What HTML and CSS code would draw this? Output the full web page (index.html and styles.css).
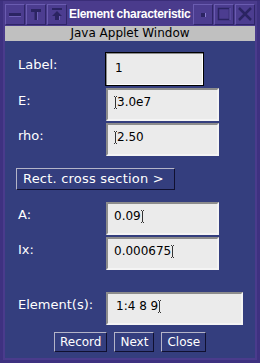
FILE: index.html
```html
<!DOCTYPE html>
<html lang="en">
<head>
  <meta charset="UTF-8" />
  <title>Element characteristic</title>
  <link rel="stylesheet" href="styles.css">
</head>
<body>
  <div class="frame">
    <div class="titlebar">
      <div class="tb-btn">
        <svg width="18" height="19" viewBox="0 0 18 19"><rect x="3" y="8" width="12" height="3" fill="#2b2462"/><line x1="3" y1="11.5" x2="15" y2="11.5" stroke="#6d5fb5"/></svg>
      </div>
      <div class="tb-btn">
        <svg width="18" height="19" viewBox="0 0 18 19"><rect x="4" y="4" width="10" height="3" fill="#2b2462"/><rect x="7.5" y="7" width="3" height="8" fill="#2b2462"/><line x1="10.5" y1="7" x2="10.5" y2="15" stroke="#6d5fb5"/></svg>
      </div>
      <div class="tb-btn">
        <svg width="18" height="19" viewBox="0 0 18 19"><rect x="4" y="3" width="10" height="2" fill="#2b2462"/><polygon points="9,6 14,11 11,11 11,15 7,15 7,11 4,11" fill="#2b2462"/><line x1="11.5" y1="11" x2="11.5" y2="15" stroke="#6d5fb5"/></svg>
      </div>
      <div class="title">Element characteristic</div>
      <div class="tb-btn">
        <svg width="18" height="19" viewBox="0 0 18 19"><rect x="7" y="8" width="4" height="4" fill="#2b2462"/><line x1="11.5" y1="8" x2="11.5" y2="12" stroke="#8a7dd0"/></svg>
      </div>
      <div class="tb-btn">
        <svg width="18" height="19" viewBox="0 0 18 19"><rect x="3.5" y="3.5" width="11" height="11" fill="none" stroke="#2b2462" stroke-width="1.5"/><line x1="15" y1="3" x2="15" y2="15" stroke="#6d5fb5"/></svg>
      </div>
      <div class="tb-btn">
        <svg width="18" height="19" viewBox="0 0 18 19"><path d="M3 3 L15 15 M15 3 L3 15" stroke="#2b2462" stroke-width="2.5"/></svg>
      </div>
    </div>

    <div class="applet-bar">Java Applet Window</div>

    <div class="panel">
      <div class="group top">
        <div class="row">
          <span class="lbl">Label:</span>
          <div class="field focus">1</div>
        </div>
        <div class="row">
          <span class="lbl">E:</span>
          <div class="field"><span class="caret"></span>3.0e7</div>
        </div>
        <div class="row">
          <span class="lbl">rho:</span>
          <div class="field"><span class="caret"></span>2.50</div>
        </div>
      </div>

      <button class="btn rect">Rect. cross section &gt;</button>

      <div class="group mid">
        <div class="row">
          <span class="lbl">A:</span>
          <div class="field">0.09<span class="caret"></span></div>
        </div>
        <div class="row">
          <span class="lbl">Ix:</span>
          <div class="field">0.000675<span class="caret"></span></div>
        </div>
      </div>

      <div class="group bottom">
        <div class="row">
          <span class="lbl">Element(s):</span>
          <div class="field wide">1:4 8 9<span class="caret"></span></div>
        </div>
      </div>

      <div class="actions">
        <button class="btn">Record</button>
        <button class="btn">Next</button>
        <button class="btn">Close</button>
      </div>
    </div>
  </div>
</body>
</html>
```

FILE: styles.css
```css
body {
  margin: 0;
  font-family: 'DejaVu Sans', sans-serif;
}

.frame {
  width: 260px;
  height: 363px;
  box-sizing: border-box;
  padding: 3px 5px 5px;
  background: #4a3b8c;
  border-top: 1px solid #3a2d78;
  display: flex;
  flex-direction: column;
  box-shadow: inset 3px 0 0 #3e3180, inset -3px 0 0 #3e3180, inset 0 -3px 0 #3e3180;
}

.titlebar {
  height: 21px;
  display: flex;
  gap: 1px;
  margin-bottom: 1px;
}

.tb-btn {
  width: 20px;
  box-sizing: border-box;
  background: #4c3d90;
  border-top: 1px solid #6a5cb0;
  border-left: 1px solid #6a5cb0;
  border-right: 1px solid #2f2668;
  border-bottom: 1px solid #2f2668;
  display: flex;
  align-items: center;
  justify-content: center;
}

.title {
  width: 129px;
  overflow: hidden;
  white-space: nowrap;
  color: #ffffff;
  font-family: 'Liberation Sans', sans-serif;
  font-weight: bold;
  font-size: 12px;
  letter-spacing: -0.3px;
  line-height: 21px;
  padding-left: 1px;
  box-sizing: border-box;
}

.applet-bar {
  height: 15px;
  background: #c0c0c0;
  color: #000;
  font-size: 12px;
  line-height: 15px;
  text-align: center;
}

.panel {
  flex: 1;
  background: #343e7e;
  padding-left: 13px;
  display: flex;
  flex-direction: column;
  align-items: flex-start;
}

.group {
  display: flex;
  flex-direction: column;
  gap: 2px;
}

.group.top {
  margin-top: 11px;
}

.group.mid {
  margin-top: 12px;
}

.group.bottom {
  margin-top: 22px;
}

.row {
  display: flex;
  align-items: flex-start;
}

.lbl {
  width: 88px;
  color: #ffffff;
  font-size: 13px;
  line-height: 14px;
  padding-top: 6px;
}

.field {
  width: 113px;
  height: 33px;
  box-sizing: border-box;
  background: #ebebeb;
  border-top: 2px solid #8c8c8c;
  border-left: 2px solid #8c8c8c;
  border-right: 2px solid #f4f4f4;
  border-bottom: 2px solid #f4f4f4;
  color: #000;
  font-size: 12px;
  line-height: 14px;
  padding: 5px 0 0 6px;
  display: flex;
  align-items: flex-start;
}

.field.focus {
  width: 99px;
  height: 34px;
  margin-left: -1px;
  border: 1px solid #000;
  box-shadow: inset 1px 1px 0 #8c8c8c, inset -1px -1px 0 #ffffff;
  padding: 8px 0 0 9px;
}

.field.wide {
  width: 137px;
  padding-left: 8px;
}

.caret {
  display: inline-block;
  width: 3px;
  height: 13px;
  margin-top: 1px;
  box-sizing: border-box;
  border-top: 1px dotted #333;
  border-bottom: 1px dotted #333;
  background: linear-gradient(#333, #333) center / 1px 100% no-repeat;
}

.btn {
  background: #343e7e;
  color: #ffffff;
  font-family: 'DejaVu Sans', sans-serif;
  font-size: 13px;
  line-height: 16px;
  padding: 1px 6px 2px;
  border-top: 1px solid #b4b4c8;
  border-left: 1px solid #b4b4c8;
  border-right: 1px solid #101030;
  border-bottom: 1px solid #101030;
  border-radius: 0;
  margin: 0;
  cursor: pointer;
}

.btn.rect {
  width: 159px;
  height: 22px;
  margin: 12px 0 0 -2px;
  text-align: left;
  padding-left: 6px;
  letter-spacing: 0.2px;
}

.actions {
  margin-top: 7px;
  padding-left: 36px;
  display: flex;
  gap: 7px;
}

.actions .btn {
  height: 20px;
  font-size: 12px;
  padding: 0 5px;
}
```
